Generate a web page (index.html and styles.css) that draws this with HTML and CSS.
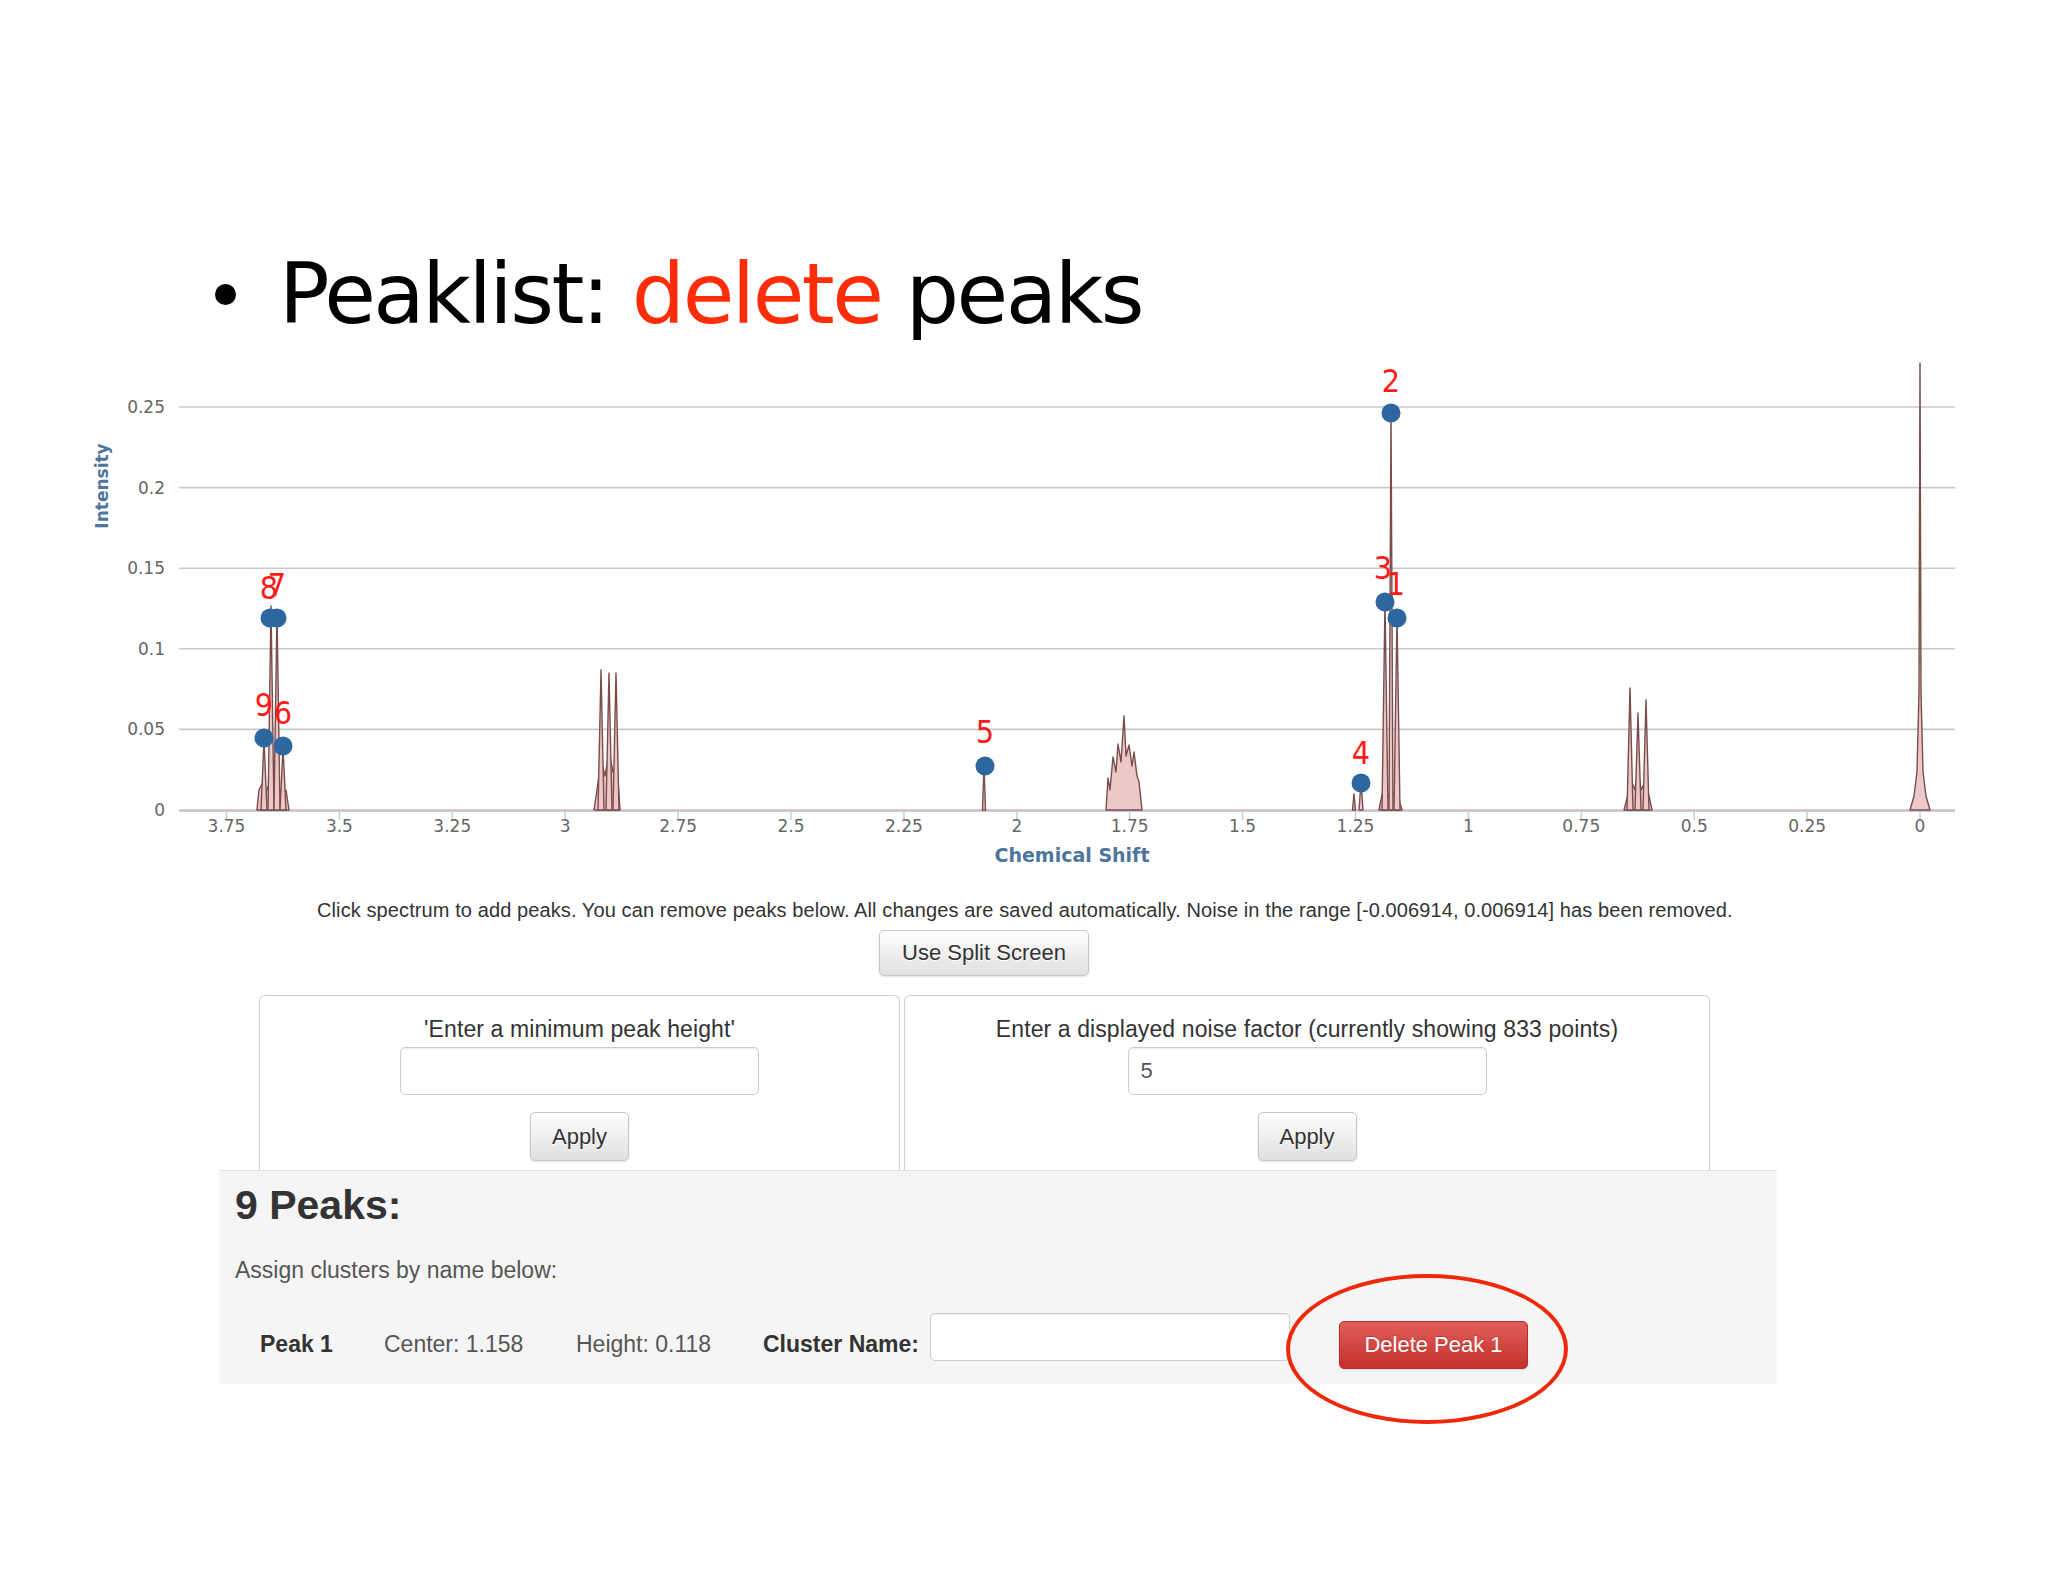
FILE: index.html
```html
<!DOCTYPE html>
<html lang="en">
<head>
<meta charset="utf-8">
<title>Peaklist: delete peaks</title>
<link rel="stylesheet" href="styles.css">
</head>
<body>
<div class="slide">
  <h1 class="title"><span class="bullet"></span><span>Peaklist: <span class="red">delete</span> peaks</span></h1>

  <svg class="chart" width="1920" height="520" viewBox="0 0 1920 520" xmlns="http://www.w3.org/2000/svg">
    <g transform="translate(-80,-350)">
      <g class="grid">
        <line x1="179" y1="407" x2="1955" y2="407"/>
        <line x1="179" y1="487.6" x2="1955" y2="487.6"/>
        <line x1="179" y1="568.2" x2="1955" y2="568.2"/>
        <line x1="179" y1="648.8" x2="1955" y2="648.8"/>
        <line x1="179" y1="729.4" x2="1955" y2="729.4"/>
      </g>
      <line class="axis" x1="179" y1="811" x2="1955" y2="811"/>
      <g class="ticks">
        <line x1="226.5" y1="811" x2="226.5" y2="820"/>
        <line x1="339.4" y1="811" x2="339.4" y2="820"/>
        <line x1="452.3" y1="811" x2="452.3" y2="820"/>
        <line x1="565.2" y1="811" x2="565.2" y2="820"/>
        <line x1="678.1" y1="811" x2="678.1" y2="820"/>
        <line x1="791" y1="811" x2="791" y2="820"/>
        <line x1="903.9" y1="811" x2="903.9" y2="820"/>
        <line x1="1016.8" y1="811" x2="1016.8" y2="820"/>
        <line x1="1129.7" y1="811" x2="1129.7" y2="820"/>
        <line x1="1242.6" y1="811" x2="1242.6" y2="820"/>
        <line x1="1355.5" y1="811" x2="1355.5" y2="820"/>
        <line x1="1468.4" y1="811" x2="1468.4" y2="820"/>
        <line x1="1581.3" y1="811" x2="1581.3" y2="820"/>
        <line x1="1694.2" y1="811" x2="1694.2" y2="820"/>
        <line x1="1807.1" y1="811" x2="1807.1" y2="820"/>
        <line x1="1920" y1="811" x2="1920" y2="820"/>
      </g>
      <g class="ylab">
        <text x="165" y="413">0.25</text>
        <text x="165" y="493.6">0.2</text>
        <text x="165" y="574.2">0.15</text>
        <text x="165" y="654.8">0.1</text>
        <text x="165" y="735.4">0.05</text>
        <text x="165" y="816">0</text>
      </g>
      <g class="xlab">
        <text x="226.5" y="832">3.75</text>
        <text x="339.4" y="832">3.5</text>
        <text x="452.3" y="832">3.25</text>
        <text x="565.2" y="832">3</text>
        <text x="678.1" y="832">2.75</text>
        <text x="791" y="832">2.5</text>
        <text x="903.9" y="832">2.25</text>
        <text x="1016.8" y="832">2</text>
        <text x="1129.7" y="832">1.75</text>
        <text x="1242.6" y="832">1.5</text>
        <text x="1355.5" y="832">1.25</text>
        <text x="1468.4" y="832">1</text>
        <text x="1581.3" y="832">0.75</text>
        <text x="1694.2" y="832">0.5</text>
        <text x="1807.1" y="832">0.25</text>
        <text x="1920" y="832">0</text>
      </g>
      <text class="atitle" x="1072" y="862" text-anchor="middle">Chemical Shift</text>
      <text class="atitle ytitle" transform="translate(108,486) rotate(-90)" text-anchor="middle">Intensity</text>

      <line class="specbase" x1="179" y1="810" x2="1955" y2="810"/>
      <g class="spec">
        <path d="M257 810 L259 790 L262 784 L266 792 L270 782 L274 792 L278 786 L282 795 L286 790 L289 810 Z"/>
        <path d="M261 810 L264 740 L267 810 Z"/>
        <path d="M268 810 L271 606 L274 810 Z"/>
        <path d="M274 810 L277 612 L280 810 Z"/>
        <path d="M280 810 L283 748 L286 810 Z"/>

        <path d="M594 810 L597 790 L601 760 L605 776 L609 752 L613 772 L617 765 L620 810 Z"/>
        <path d="M598 810 L601 670 L604 810 Z"/>
        <path d="M606 810 L609 673 L612 810 Z"/>
        <path d="M613 810 L616 673 L619 810 Z"/>

        <path d="M982.5 810 L984 766 L985.5 810 Z"/>

        <path d="M1106 810 L1108 778 L1110 790 L1113 757 L1116 772 L1118 744 L1121 762 L1124 716 L1126 756 L1129 745 L1132 766 L1134 752 L1137 776 L1139 782 L1142 810 Z"/>

        <path d="M1352.5 810 L1354 794 L1355.5 810 Z"/>
        <path d="M1359 810 L1361 782 L1363 810 Z"/>

        <path d="M1379 810 L1382 795 L1386 788 L1390 800 L1394 792 L1398 796 L1402 810 Z"/>
        <path d="M1382 810 L1385 601 L1388 810 Z"/>
        <path d="M1389 810 L1391 413 L1393 810 Z"/>
        <path d="M1394 810 L1397 617 L1400 810 Z"/>

        <path d="M1624 810 L1628 795 L1631 780 L1635 790 L1638 768 L1641 790 L1645 782 L1649 796 L1652 810 Z"/>
        <path d="M1627 810 L1630 688 L1633 810 Z"/>
        <path d="M1635 810 L1638 713 L1641 810 Z"/>
        <path d="M1643 810 L1646 700 L1649 810 Z"/>

        <path d="M1910 810 L1914 796 L1917 772 L1919 692 L1920 363 L1921 692 L1923 772 L1926 796 L1930 810 Z"/>
      </g>

      <g class="markers">
        <circle cx="270" cy="618" r="9.5"/>
        <circle cx="277" cy="618" r="9.5"/>
        <circle cx="264" cy="738" r="9.5"/>
        <circle cx="283" cy="746" r="9.5"/>
        <circle cx="985" cy="766" r="9.5"/>
        <circle cx="1361" cy="783" r="9.5"/>
        <circle cx="1391" cy="413" r="9.5"/>
        <circle cx="1385" cy="602" r="9.5"/>
        <circle cx="1397" cy="618" r="9.5"/>
      </g>
      <g class="plabels">
        <text x="1391" y="392">2</text>
        <text x="269" y="599">8</text>
        <text x="277" y="596">7</text>
        <text x="264" y="716">9</text>
        <text x="283" y="724">6</text>
        <text x="985" y="743">5</text>
        <text x="1361" y="764">4</text>
        <text x="1383" y="579">3</text>
        <text x="1396" y="595">1</text>
      </g>
    </g>
  </svg>

  <p class="note">Click spectrum to add peaks. You can remove peaks below. All changes are saved automatically. Noise in the range [-0.006914, 0.006914] has been removed.</p>
  <button class="btn split" type="button">Use Split Screen</button>

  <div class="panels">
    <div class="panel panel-left">
      <div class="panel-label">'Enter a minimum peak height'</div>
      <input class="field" type="text" value="">
      <button class="btn apply" type="button">Apply</button>
    </div>
    <div class="panel panel-right">
      <div class="panel-label">Enter a displayed noise factor (currently showing 833 points)</div>
      <input class="field" type="text" value="5">
      <button class="btn apply" type="button">Apply</button>
    </div>
  </div>

  <div class="peaks">
    <h2 class="peaks-title">9 Peaks:</h2>
    <p class="assign">Assign clusters by name below:</p>
    <div class="peak-row">
      <span class="txt peak-name">Peak 1</span>
      <span class="txt center-v">Center: 1.158</span>
      <span class="txt height-v">Height: 0.118</span>
      <span class="txt cluster">Cluster Name:</span>
      <input class="field cluster-input" type="text" value="">
      <button class="btn delete" type="button">Delete Peak 1</button>
    </div>
    <div class="ring"></div>
  </div>
</div>
</body>
</html>
```

FILE: styles.css
```css
html, body {
  margin: 0;
  padding: 0;
  background: #ffffff;
}

.slide {
  position: relative;
  width: 2048px;
  height: 1582px;
  overflow: hidden;
  font-family: "Liberation Sans", Arial, sans-serif;
  color: #333;
}

/* Slide title */
.title {
  display: flex;
  align-items: center;
  height: 84px;
  margin: 252px 0 0 215px;
  font: 400 84px/84px "DejaVu Sans", sans-serif;
  letter-spacing: -2.5px;
  color: #000;
}

.bullet {
  flex: none;
  width: 21px;
  height: 21px;
  border-radius: 50%;
  background: #000;
  margin-right: 43px;
}

.red {
  color: #ff2d0a;
}

/* Chart */
.chart {
  display: block;
  margin: 14px 0 0 80px;
  font-family: "DejaVu Sans", sans-serif;
}

.grid line {
  stroke: #c9c9cc;
  stroke-width: 1.6;
}

.axis {
  stroke: #c0d0e0;
  stroke-width: 2;
}

.ticks line {
  stroke: #c0d0e0;
  stroke-width: 1.5;
}

.ylab text {
  font-size: 17px;
  fill: #666;
  text-anchor: end;
}

.xlab text {
  font-size: 17px;
  fill: #666;
  text-anchor: middle;
}

.atitle {
  font-size: 19px;
  font-weight: 700;
  fill: #4d759e;
}

.ytitle {
  font-size: 17px;
}

.specbase {
  stroke: #e2b9b9;
  stroke-width: 1.5;
}

.spec path {
  fill: #ecc8c8;
  stroke: #7a4c4c;
  stroke-width: 1.4;
  stroke-linejoin: round;
}

.markers circle {
  fill: #2e669f;
}

.plabels text {
  font-family: "DejaVu Sans Condensed", "DejaVu Sans", sans-serif;
  font-size: 32px;
  fill: #ff1a1a;
  text-anchor: middle;
}

/* App area */
.note {
  margin: 28px 0 0 317px;
  font-size: 20px;
  line-height: 24px;
  letter-spacing: 0.1px;
  color: #333;
  white-space: nowrap;
}

.btn {
  display: block;
  box-sizing: border-box;
  padding: 0;
  font-family: "Liberation Sans", Arial, sans-serif;
  font-size: 22px;
  color: #333;
  background: linear-gradient(#ffffff, #e0e0e0);
  border: 1.5px solid #c8c8c8;
  border-radius: 5px;
  box-shadow: 0 1px 2px rgba(0, 0, 0, 0.12);
  text-shadow: 0 1px 0 #fff;
}

.split {
  width: 210px;
  height: 46px;
  margin: 8px 0 0 879px;
}

.panels {
  display: flex;
  gap: 4px;
  margin: 19px 0 0 259px;
}

.panel {
  box-sizing: border-box;
  height: 175px;
  border: 1.5px solid #cfcfcf;
  border-bottom: none;
  border-radius: 6px 6px 0 0;
  display: flex;
  flex-direction: column;
  align-items: center;
  padding-top: 18px;
}

.panel-left {
  width: 641px;
}

.panel-right {
  width: 806px;
}

.panel-label {
  font-size: 23px;
  line-height: 30px;
  letter-spacing: 0.1px;
  color: #333;
}

.field {
  box-sizing: border-box;
  width: 359px;
  height: 48px;
  margin: 3px 0 0;
  padding: 0 12px;
  border: 1.5px solid #cccccc;
  border-radius: 5px;
  background: #fff;
  box-shadow: inset 0 1px 1px rgba(0, 0, 0, 0.075);
  font-family: "Liberation Sans", Arial, sans-serif;
  font-size: 22px;
  color: #555;
}

.apply {
  width: 99px;
  height: 49px;
  margin-top: 17px;
}

/* Peaks list */
.peaks {
  position: relative;
  box-sizing: border-box;
  width: 1557px;
  height: 213px;
  margin-left: 219px;
  padding: 10px 16px 0;
  background: #f5f5f6;
  border-top: 1.5px solid #e3e3e3;
  box-shadow: 1px 1px 2px rgba(0, 0, 0, 0.05);
}

.peaks-title {
  margin: 0;
  font: 700 41px/48px "Liberation Sans", Arial, sans-serif;
  color: #333;
}

.assign {
  margin: 26px 0 0;
  font-size: 23px;
  line-height: 30px;
  color: #555;
}

.peak-row {
  display: flex;
  align-items: flex-start;
  margin-top: 28px;
  font-size: 23px;
  color: #555;
}

.txt {
  flex: none;
  line-height: 48px;
  margin-top: 7px;
}

.peak-name {
  width: 124px;
  margin-left: 25px;
  font-weight: 700;
  color: #333;
}

.center-v {
  width: 192px;
}

.height-v {
  width: 187px;
}

.cluster {
  width: 167px;
  font-weight: 700;
  color: #333;
}

.cluster-input {
  width: 360px;
  margin: 0;
}

.delete {
  width: 189px;
  height: 48px;
  margin: 8px 0 0 49px;
  color: #fff;
  background: linear-gradient(#e15e5a, #c4302c);
  border: 1px solid #b92c28;
  text-shadow: 0 -1px 0 rgba(0, 0, 0, 0.2);
}

/* Annotation ring drawn over the button */
.ring {
  position: absolute;
  left: 1067px;
  top: 103px;
  width: 282px;
  height: 150px;
  box-sizing: border-box;
  border: 4.5px solid #f0280a;
  border-radius: 50%;
}
```
